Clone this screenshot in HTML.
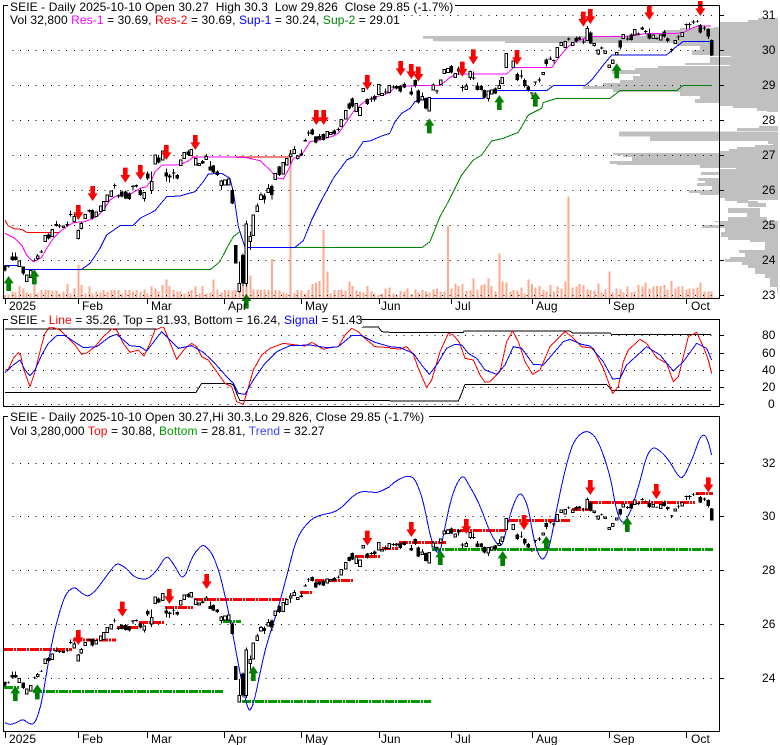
<!DOCTYPE html>
<html><head><meta charset="utf-8"><title>SEIE</title>
<style>
html,body{margin:0;padding:0;background:#fff}
svg{display:block}
text{font-family:"Liberation Sans",Arial,sans-serif;font-size:12px;fill:#000;white-space:pre;letter-spacing:.1px}
.l{fill:none;stroke-width:1;vector-effect:non-scaling-stroke;shape-rendering:crispEdges}
.v{fill:none;stroke:#ffa98f;stroke-width:2;vector-effect:non-scaling-stroke;shape-rendering:crispEdges}
.w{fill:none;stroke:#000;stroke-width:1;vector-effect:non-scaling-stroke;shape-rendering:crispEdges}
.f{fill:none;stroke:#000;stroke-width:3.5;vector-effect:non-scaling-stroke;shape-rendering:crispEdges}
.h{fill:#fff;stroke:#000;stroke-width:1;vector-effect:non-scaling-stroke;shape-rendering:crispEdges}
.g{fill:none;stroke:#000;stroke-width:1;stroke-dasharray:1 6.67;shape-rendering:crispEdges}
.k{fill:none;stroke:#000;stroke-width:1;shape-rendering:crispEdges}
.ds{fill:none;stroke-width:3;stroke-dasharray:9 1 2 1;shape-rendering:crispEdges}
</style></head><body>
<svg width="780" height="745" viewBox="0 0 780 745" xmlns="http://www.w3.org/2000/svg">
<defs>
<path id="dn" d="M-7 0h14v22h8L0 45L-15 22h8z" fill="#f00"/>
<path id="up" d="M-7 45h14v-23h8L0 0L-15 22h8z" fill="#008000"/>
<g id="candles">
<g transform="scale(.33333)">
<path class="w" d="M15 795V815M25 795V803M37 757V782M47 757V782M70 800V825M103 776V785M113 762V780M124 750V759M146 700V718M169 663V680M179 672V684M191 676V684M202 665V680M212 632V650M223 642V665M235 688V718M244 665V688M268 628V638M277 628V658M344 550V565M355 583V594M366 572V592M377 572V597M388 578V600M399 555V572M409 553V562M421 566V588M433 578V605M443 515V540M455 515V582M476 468V490M499 505V545M509 522V547M521 507V537M532 522V538M565 450V468M608 480V492M619 462V478M631 483V512M640 495V520M652 512V528M664 540V570M697 565V612M707 735V790M718 785V878M729 760V858M739 662V860M751 695V750M772 610V635M783 578V598M793 580V610M805 552V578M816 553V598M838 498V528M872 450V490M883 438V460M893 465V478M904 448V468M916 415V425M926 392V408M937 386V405M948 408V430M958 402V420M970 400V422M1003 388V404M1015 382V394M1048 308V328M1057 292V322M1102 295V315M1114 290V306M1124 285V305M1157 265V284"/>
<path class="f" d="M15 797V812M25 797V800M37 770V780M47 770V780M70 800V820M103 780V782M124 754V757M146 703V715M169 672V678M179 677V680M202 672V675M212 642V645M268 630V635M277 630V655M344 555V558M355 587V590M366 575V590M377 575V595M388 580V597M399 558V561M409 555V560M421 570V585M443 520V535M476 472V487M499 518V530M509 527V533M521 518V521M532 525V535M565 455V465M608 483V490M631 500V512M640 497V518M652 515V525M697 570V610M707 735V790M729 765V850M739 765V845M793 587V598M816 558V585M838 500V525M904 460V466M916 420V425M926 398V400M937 388V403M948 410V428M958 408V418M970 402V420M1003 392V402M1015 387V390M1048 310V325M1057 295V320M1102 297V312M1114 295V298M1124 288V298M1157 275V278"/>
<path class="h" d="M58 783h4V800h-8V783zM80 825h4V845h-8V825zM92 812h4V832h-8V812zM113 768h4V776h-8V768zM136 707h4V725h-8V707zM157 688h4V710h-8V688zM191 678h3V683h-6V678zM223 650h4V665h-8V650zM235 692h4V715h-8V692zM244 670h4V685h-8V670zM256 643h4V655h-8V643zM289 636h4V650h-8V636zM302 618h4V635h-8V618zM311 605h4V632h-8V605zM322 585h4V605h-8V585zM334 573h4V590h-8V573zM433 578h4V595h-8V578zM455 545h4V572h-8V545zM466 465h4V492h-8V465zM488 453h4V480h-8V453zM542 480h4V497h-8V480zM553 458h4V476h-8V458zM574 448h4V466h-8V448zM587 476h4V495h-8V476zM598 490h4V497h-8V490zM619 470h4V478h-8V470zM664 543h4V557h-8V543zM675 540h4V555h-8V540zM686 537h4V555h-8V537zM718 850h4V875h-8V850zM739 672h4V850h-8V672zM751 710h4V725h-8V710zM760 645h4V707h-8V645zM772 618h4V635h-8V618zM783 585h4V598h-8V585zM805 565h4V578h-8V565zM826 520h4V538h-8V520zM850 487h4V522h-8V487zM860 475h4V495h-8V475zM872 462h4V470h-8V462zM883 448h4V460h-8V448zM893 468h4V476h-8V468zM982 395h4V412h-8V395zM992 397h4V403h-8V397zM1024 358h4V380h-8V358zM1037 332h4V357h-8V332zM1069 310h4V335h-8V310zM1080 322h4V347h-8V322zM1090 265h4V275h-8V265zM1136 253h4V283h-8V253zM1146 280h4V287h-8V280zM1168 257h4V277h-8V257z"/>
</g>
<g transform="translate(390,0) scale(.33333)">
<path class="w" d="M10 255V266M20 255V268M31 255V278M43 248V264M64 262V286M76 238V262M85 268V310M97 278V300M108 292V328M130 250V270M141 268V282M184 195V220M206 200V225M217 255V275M229 250V268M241 212V240M251 215V240M262 248V272M274 255V272M283 268V296M295 273V305M316 262V282M328 240V265M382 218V243M394 210V235M404 235V263M415 256V275M426 277V290M436 244V255M448 232V248M469 176V200M481 170V180M492 178V190M536 113V122M559 110V128M568 110V120M581 118V132M592 78V122M602 95V132M613 130V140M625 150V165M635 140V148M691 120V148M713 110V122M724 100V122M745 98V106M757 80V90M767 90V100M778 85V118M801 112V118M823 90V112M833 113V128M845 145V158M865 105V120M889 70V88M899 68V85M910 60V72M922 60V67M931 72V100M943 78V92M955 85V117M965 118V168"/>
<path class="f" d="M10 259V262M20 258V265M31 258V275M43 252V262M64 275V284M76 240V258M85 272V308M108 295V325M141 271V274M184 198V218M206 205V215M217 261V264M251 232V235M262 257V270M274 258V270M283 270V293M316 265V280M382 222V240M394 227V230M404 240V258M415 260V272M426 277V280M436 244V247M448 238V241M469 178V192M481 175V178M492 180V183M536 116V119M559 114V125M568 113V118M581 124V127M602 97V130M635 143V146M691 122V143M713 115V118M724 103V120M745 100V103M757 83V88M767 93V96M778 100V115M801 114V117M823 95V110M833 115V123M845 147V150M865 110V113M889 72V75M899 72V75M910 65V68M922 64V66M931 75V98M943 82V85M955 87V110M965 120V167"/>
<path class="h" d="M97 290h4V300h-8V290zM118 293h4V333h-8V293zM130 255h4V270h-8V255zM152 240h4V253h-8V240zM163 208h4V220h-8V208zM174 205h4V218h-8V205zM196 220h4V232h-8V220zM229 258h4V268h-8V258zM241 215h4V233h-8V215zM295 273h4V295h-8V273zM305 270h4V282h-8V270zM328 257h4V265h-8V257zM337 232h4V250h-8V232zM349 160h4V202h-8V160zM370 183h4V202h-8V183zM460 217h4V224h-8V217zM502 143h4V172h-8V143zM514 127h4V137h-8V127zM526 125h4V142h-8V125zM548 127h4V137h-8V127zM592 85h4V122h-8V85zM613 130h4V137h-8V130zM625 150h4V162h-8V150zM646 153h4V160h-8V153zM658 195h4V203h-8V195zM668 180h4V190h-8V180zM680 157h4V165h-8V157zM700 103h4V115h-8V103zM734 88h4V105h-8V88zM790 105h4V115h-8V105zM812 105h4V120h-8V105zM856 122h4V130h-8V122zM877 97h4V110h-8V97z"/>
</g>
</g>
</defs>

<!-- PANEL 1 -->
<path fill="#c0c0c0" d="M758 18H778V20H758zM748 20H778V22H748zM720 22H778V27H720zM714 27H778V28H714zM680 28H778V30H680zM665 30H778V33H665zM645 33H778V36H645zM423 36H778V38.7H423zM433 38.7H778V41.3H433zM505 41.3H778V43H505zM677 43H778V46H677zM700 46H778V50H700zM692 50H778V55H692zM710 55H778V56H710zM731 56H778V57H731zM710 57H778V63H710zM685 63H778V65H685zM730 65H778V66H730zM658 66H778V68H658zM635 68H778V70H635zM612 70H778V74H612zM640 74H778V76H640zM633 76H778V80H633zM620 80H778V83H620zM603 83H778V86H603zM583 86H778V89H583zM613 89H778V92H613zM680 92H778V96H680zM700 96H778V99H700zM695 99H778V103H695zM720 103H778V106H720zM733 106H778V108H733zM757 108H778V111H757zM767 111H778V112H767zM759 126H778V128H759zM737 128H778V131H737zM619 131.5H778V136.5H619zM650 136.5H778V141H650zM768 141H778V144H768zM773 144H778V145H773zM755 145H778V147H755zM737 147H778V149H737zM729 149H778V151H729zM720 151H778V153H720zM613 153H778V155H613zM623 155H778V157H623zM632 157H778V161H632zM610 161H778V164H610zM617 164H778V165H617zM700 165H778V168H700zM736 168H778V169H736zM720 169H778V172H720zM701 172H778V175H701zM720 175H778V178H720zM698 178H778V181H698zM705 181H778V183H705zM697 183H778V186H697zM712 186H778V190H712zM689 190H778V193H689zM700 193H778V195H700zM720 195H778V198H720zM725 198H778V200H725zM725 200H748V201H725zM737 201H758V203H737zM748 203H766V207H748zM728 208H760V213H728zM747 213H760V217H747zM728 217H767V221H728zM715 221H778V222H715zM720 222H778V225H720zM702 225H778V228H702zM725 228H778V232H725zM721 232H778V237H721zM728 237H778V240H728zM750 240H778V242H750zM765 242H778V250H765zM739 250H778V253H739zM745 253H778V257H745zM730 257H778V259H730zM725 259H778V262H725zM742 262H778V265H742zM748 265H778V268H748zM755 268H778V274H755zM765 274H778V278H765zM770 278H778V287H770zM777 287H778V293H777z"/>
<g transform="scale(.33333)">
<path class="v" d="M15 885V894M25 883V894M37 875V894M47 878V894M58 858V894M70 865V894M80 878V894M92 880V894M103 830V894M113 880V894M124 870V894M136 870V894M146 870V894M157 872V894M169 872V894M179 880V894M191 875V894M202 852V894M212 880V894M223 865V894M235 795V894M244 855V894M256 880V894M268 860V894M277 880V894M289 875V894M302 878V894M311 870V894M322 875V894M334 870V894M344 870V894M355 870V894M366 882V894M377 870V894M388 870V894M399 875V894M409 870V894M421 875V894M433 868V894M443 880V894M455 860V894M466 865V894M476 875V894M488 855V894M499 838V894M509 858V894M521 870V894M532 875V894M542 875V894M553 880V894M565 875V894M574 870V894M587 860V894M598 880V894M608 858V894M619 880V894M631 878V894M640 838V894M652 870V894M664 878V894M675 870V894M686 870V894M697 872V894M707 870V894M718 870V894M729 855V894M739 840V894M751 827V894M760 868V894M772 868V894M783 870V894M793 868V894M805 870V894M816 777V894M826 870V894M838 872V894M850 878V894M860 880V894M872 450V894M883 880V894M893 870V894M904 872V894M916 880V894M926 870V894M937 852V894M948 848V894M958 843V894M970 690V894M982 815V894M992 880V894M1003 870V894M1015 870V894M1024 868V894M1037 872V894M1048 845V894M1057 858V894M1069 872V894M1080 875V894M1090 878V894M1102 858V894M1114 875V894M1124 880V894M1136 885V894M1146 880V894M1157 865V894M1168 862V894"/>
</g>
<g transform="translate(390,0) scale(.33333)">
<path class="v" d="M10 880V894M20 885V894M31 873V894M43 875V894M53 865V894M64 882V894M76 868V894M85 878V894M97 870V894M108 875V894M118 878V894M130 868V894M141 865V894M152 875V894M163 875V894M174 678V894M184 865V894M196 850V894M206 858V894M217 852V894M229 872V894M241 872V894M251 835V894M262 868V894M274 855V894M283 852V894M295 835V894M305 858V894M316 875V894M328 760V894M337 845V894M349 847V894M361 875V894M370 870V894M382 872V894M394 862V894M404 880V894M415 838V894M426 852V894M436 862V894M448 858V894M460 870V894M469 875V894M481 855V894M492 875V894M502 860V894M514 866V894M526 845V894M536 590V894M548 862V894M559 860V894M568 852V894M581 855V894M592 868V894M602 870V894M613 872V894M625 850V894M635 878V894M646 868V894M658 815V894M668 878V894M680 865V894M691 868V894M700 878V894M713 860V894M724 878V894M734 875V894M745 855V894M757 860V894M767 848V894M778 865V894M790 860V894M801 858V894M812 858V894M823 855V894M833 870V894M845 843V894M856 865V894M865 860V894M877 860V894M889 868V894M899 865V894M910 865V894M922 862V894M931 848V894M943 875V894M955 875V894M965 875V894"/>
</g>
<path class="g" d="M12.5 50.5H718M12.5 85.5H718M12.5 120.5H718M12.5 155.5H718M12.5 190.5H718M12.5 225.5H718M12.5 260.5H718M12.5 295.5H718"/>
<path class="g" d="M404 15.5H718"/>
<g transform="scale(.33333)">
<path class="l" stroke="#f00" d="M15 660L25 678 45 687 65 688 80 697H180M575 471H870"/>
<path class="l" stroke="#008000" d="M245 808H632L660 785 680 745 700 710 720 695M750 742H1170"/>
<path class="l" stroke="#00f" d="M15 797H60L75 808H245L270 790 300 745 320 705 360 677 400 676 420 655 465 632 500 590 540 588 585 575 610 545 625 522 665 520 690 535 700 575 715 680 735 742H885L910 722 935 660 965 600 1000 535 1040 480 1060 470 1090 425 1110 423 1145 408 1170 400"/>
<path class="l" stroke="#f0f" d="M15 700L25 705 45 715 65 735 80 765 100 785 112 780 125 772 140 745 160 715 180 695 200 680 220 668 255 665 290 650 310 630 330 600 345 590 365 583 395 580 420 565 440 560 455 540 465 515 487 495 530 495 545 492 565 483 580 472 620 471 735 472 780 482 810 510 830 533 850 537 870 500 880 475 900 470 915 450 930 425 960 420 1000 408 1015 400 1040 365 1060 335 1085 312 1100 300 1115 295 1170 278"/>
</g>
<g transform="translate(390,0) scale(.33333)">
<path class="l" stroke="#008000" d="M0 742H97L120 725 150 650 175 605 215 525 250 480 275 465 305 423 340 415 385 397 415 345 455 325 460 308 500 295H660L690 272H860L880 256H963"/>
<path class="l" stroke="#00f" d="M0 398L15 365 35 340 60 325 75 305 105 295H280L300 272H470L490 257H585L605 240 640 195 665 165H830L850 147 880 124H960"/>
<path class="l" stroke="#f0f" d="M0 278L10 265 30 258 150 256 165 245 180 232 200 222H350L370 203H485L505 175 525 150 545 130 570 120 600 110H690L720 108 745 105 770 100H860L880 98 905 85 925 78H963"/>
</g>
<use href="#candles"/>
<g transform="scale(.33333)">
<use href="#dn" x="235" y="615"/><use href="#dn" x="278" y="558"/><use href="#dn" x="376" y="503"/><use href="#dn" x="421" y="495"/><use href="#dn" x="499" y="435"/><use href="#dn" x="586" y="405"/><use href="#dn" x="949" y="330"/><use href="#dn" x="971" y="330"/><use href="#dn" x="1102" y="225"/>
<use href="#up" x="26" y="828"/><use href="#up" x="103" y="808"/><use href="#up" x="739" y="881"/>
</g>
<g transform="translate(390,0) scale(.33333)">
<use href="#dn" x="32" y="183"/><use href="#dn" x="64" y="192"/><use href="#dn" x="85" y="200"/><use href="#dn" x="217" y="185"/><use href="#dn" x="250" y="148"/><use href="#dn" x="381" y="150"/><use href="#dn" x="580" y="35"/><use href="#dn" x="601" y="27"/><use href="#dn" x="778" y="15"/><use href="#dn" x="931" y="3"/>
<use href="#up" x="118" y="355"/><use href="#up" x="328" y="285"/><use href="#up" x="436" y="275"/><use href="#up" x="680" y="190"/>
</g>
<path class="k" d="M8 5.5H3.5V298.5H719.5V5.5H455M719.5 15.5H724M719.5 50.5H724M719.5 85.5H724M719.5 120.5H724M719.5 155.5H724M719.5 190.5H724M719.5 225.5H724M719.5 260.5H724M719.5 295.5H724M5.5 298V304M78.5 298V304M147.5 298V304M224.5 298V304M301.5 298V304M379.5 298V304M451.5 298V304M532.5 298V304M609.5 298V304M686.5 298V304"/>
<text x="10" y="11">SEIE - Daily 2025-10-10 Open 30.27  High 30.3  Low 29.826  Close 29.85 (-1.7%)</text>
<text x="10" y="24">Vol 32,800 <tspan fill="#f0f">Res-1</tspan> = 30.69, <tspan fill="#f00">Res-2</tspan> = 30.69, <tspan fill="#00f">Sup-1</tspan> = 30.24, <tspan fill="#008000">Sup-2</tspan> = 29.01</text>
<text x="762" y="19">31</text><text x="762" y="54">30</text><text x="762" y="89">29</text><text x="762" y="124">28</text><text x="762" y="159">27</text><text x="762" y="194">26</text><text x="762" y="229">25</text><text x="762" y="264">24</text><text x="762" y="299">23</text>
<text x="9" y="310">2025</text><text x="82" y="310">Feb</text><text x="151" y="310">Mar</text><text x="228" y="310">Apr</text><text x="305" y="310">May</text><text x="381" y="310">Jun</text><text x="455" y="310">Jul</text><text x="536" y="310">Aug</text><text x="613" y="310">Sep</text><text x="691" y="310">Oct</text>

<!-- PANEL 2 -->
<path class="g" d="M12.5 335.5H718M12.5 353.5H718M12.5 370.5H718M12.5 387.5H718M12.5 404.5H718"/>
<g transform="translate(0,305) scale(.33333)">
<path class="l" stroke="#000" d="M15 72H470M1085 66H1135L1145 80 1170 82M15 262H588L605 235H690L700 240 712 270 720 287H1170"/>
<path class="l" stroke="#f00" d="M15 195L25 193 40 160 55 143 62 150 70 190 90 245 105 200 125 120 135 85 150 65 180 75 210 105 225 120 245 148 262 143 285 125 310 95 335 72 350 75 370 115 390 142 415 135 432 153 450 115 465 75 490 65 505 100 530 163 555 130 575 115 590 125 605 155 625 165 650 200 675 235 695 245 710 290 730 298 740 265 760 195 785 150 810 130 850 115 890 120 915 123 935 112 950 120 970 133 990 128 1015 125 1035 90 1055 70 1075 80 1095 100 1125 125 1170 128"/>
<path class="l" stroke="#00f" d="M15 203L40 180 60 165 75 195 90 212 105 195 125 150 145 115 170 92 195 92 230 115 250 128 290 125 330 95 350 88 390 122 420 125 440 138 485 80 505 100 535 130 575 122 610 142 640 170 680 215 700 235 715 265 735 268 760 225 795 175 830 140 870 122 930 120 980 128 1015 125 1055 92 1085 92 1125 112 1170 125"/>
</g>
<g transform="translate(390,305) scale(.33333)">
<path class="l" stroke="#000" d="M0 82H220L222 78H540L548 84H660L665 88H963M0 288H205L213 270 225 238H650L665 256H963"/>
<path class="l" stroke="#f00" d="M0 130L30 132 50 125 70 148 85 190 110 248 125 225 150 140 175 85 190 90 208 112 225 160 250 165 270 210 285 232 300 230 330 200 350 110 368 78 385 110 405 170 428 208 450 195 480 125 510 95 525 80 545 95 575 125 610 130 640 190 668 265 685 245 700 170 715 135 750 103 770 115 800 158 830 175 850 230 865 215 895 95 920 82 940 125 955 165 965 205"/>
<path class="l" stroke="#00f" d="M0 125L30 128 70 145 95 180 118 208 140 180 170 130 195 118 215 120 235 145 260 160 285 195 320 208 345 180 370 125 395 130 430 178 460 180 490 145 520 110 540 103 575 118 600 123 640 170 668 222 690 220 710 180 770 125 810 150 850 198 880 170 920 115 950 130 965 165"/>
</g>
<rect x="8" y="314" width="355" height="13" fill="#fff"/>
<path class="k" d="M8 319.5H3.5V406.5H719.5V319.5H361M719.5 335.5H724M719.5 353.5H724M719.5 370.5H724M719.5 387.5H724M719.5 404.5H724"/>
<text x="10" y="324">SEIE - <tspan fill="#f00">Line</tspan> = 35.26, Top = 81.93, Bottom = 16.24, <tspan fill="#00f">Signal</tspan> = 51.43</text>
<text x="762" y="339">80</text><text x="762" y="357">60</text><text x="762" y="374">40</text><text x="762" y="391">20</text><text x="768" y="408">0</text>

<!-- PANEL 3 -->
<path class="g" d="M12.5 463.5H718M12.5 516.5H718M12.5 570.5H718M12.5 624.5H718M12.5 678.5H718"/>
<path class="ds" stroke="#f00" d="M4 649.5H72M73 640H116M117 627.5H138M139 622.5H164M165 607.5H193M194 599.5H287M300 592.5H313M315 580.5H353M355 556.5H380M382 548.5H398M399 542.5H446M447 530.5H505M509 520.5H570M572 509.5H589M589 502.5H695M696 493.5H713"/>
<path class="ds" stroke="#009900" d="M4 687.5H19M33 691.5H223M223 621.5H241M242 701.5H431M432 549.5H713"/>
<g transform="translate(0,410) scale(.33333)">
<path class="l" stroke="#00f" d="M15 938L22 941Q30 945 40 941Q50 938 59 933Q68 925 79 935Q90 943 97 942Q105 942 115 911Q125 880 132 835Q140 790 147 745Q155 700 167 650Q180 600 190 572Q200 545 212 538Q225 528 235 541Q245 550 255 555Q265 562 277 550Q290 540 307 515Q325 490 337 475Q350 456 362 465Q375 470 390 487Q405 505 422 506Q440 510 452 499Q465 490 482 463Q500 430 510 448Q520 460 535 487Q550 520 565 472Q580 430 595 417Q610 398 622 415Q635 425 647 457Q660 490 672 545Q685 600 692 640Q700 680 710 735Q720 790 732 847Q745 912 752 897Q760 890 775 815Q790 740 800 705Q810 670 820 640Q830 610 845 555Q860 500 875 440Q890 380 910 355Q930 330 945 322Q960 315 987 310Q1015 305 1042 275Q1070 245 1090 245Q1110 245 1120 247Q1130 250 1150 240L1170 230"/>
</g>
<g transform="translate(390,410) scale(.33333)">
<path class="l" stroke="#00f" d="M0 228L12 218Q25 208 40 202Q55 197 65 201Q75 205 87 237Q100 270 112 335Q125 400 137 422Q150 440 157 392Q165 350 177 295Q190 240 204 216Q218 188 229 211Q240 230 255 257Q270 285 285 327Q300 370 317 395Q335 425 345 375Q355 330 367 294Q380 258 387 254Q395 246 405 270Q415 290 422 335Q430 380 437 407Q445 435 452 443Q460 455 470 431Q480 410 492 340Q505 270 522 195Q540 120 552 97Q565 75 577 69Q590 60 605 71Q620 80 640 135Q660 190 670 250Q680 310 690 327Q700 348 712 322Q725 300 737 257Q750 215 760 175Q770 135 780 123Q790 108 802 118Q815 125 827 140Q840 155 852 177Q865 200 872 202Q880 207 895 172Q910 140 920 110Q930 80 937 77Q945 72 950 85Q955 95 960 115L965 135"/>
</g>
<use href="#candles" transform="translate(0,477.6) scale(1,.769)"/>
<g transform="translate(0,410) scale(.33333)">
<use href="#dn" x="235" y="660"/><use href="#dn" x="367" y="575"/><use href="#dn" x="508" y="537"/><use href="#dn" x="620" y="492"/><use href="#dn" x="1102" y="362"/>
<use href="#up" x="46" y="828"/><use href="#up" x="112" y="823"/><use href="#up" x="760" y="768"/>
</g>
<g transform="translate(390,410) scale(.33333)">
<use href="#dn" x="64" y="336"/><use href="#dn" x="229" y="327"/><use href="#dn" x="402" y="315"/><use href="#dn" x="601" y="210"/><use href="#dn" x="799" y="222"/><use href="#dn" x="955" y="202"/>
<use href="#up" x="151" y="420"/><use href="#up" x="338" y="423"/><use href="#up" x="469" y="378"/><use href="#up" x="712" y="321"/>
</g>
<path class="k" d="M8 416.5H3.5V731.5H719.5V416.5H429M719.5 463.5H724M719.5 516.5H724M719.5 570.5H724M719.5 624.5H724M719.5 678.5H724M5.5 731V738M78.5 731V738M147.5 731V738M224.5 731V738M301.5 731V738M379.5 731V738M451.5 731V738M532.5 731V738M609.5 731V738M686.5 731V738"/>
<text x="10" y="421">SEIE - Daily 2025-10-10 Open 30.27,Hi 30.3,Lo 29.826, Close 29.85 (-1.7%)</text>
<text x="10" y="435">Vol 3,280,000 <tspan fill="#f00">Top</tspan> = 30.88, <tspan fill="#009900">Bottom</tspan> = 28.81, <tspan fill="#4040ff">Trend</tspan> = 32.27</text>
<text x="762" y="467">32</text><text x="762" y="520">30</text><text x="762" y="574">28</text><text x="762" y="628">26</text><text x="762" y="682">24</text>
<text x="9" y="743">2025</text><text x="82" y="743">Feb</text><text x="151" y="743">Mar</text><text x="228" y="743">Apr</text><text x="305" y="743">May</text><text x="381" y="743">Jun</text><text x="455" y="743">Jul</text><text x="536" y="743">Aug</text><text x="613" y="743">Sep</text><text x="691" y="743">Oct</text>
</svg>
</body></html>
